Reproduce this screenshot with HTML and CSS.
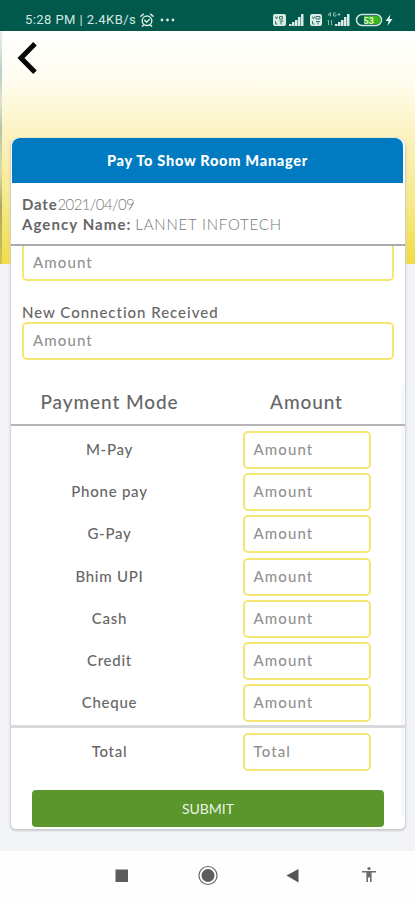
FILE: index.html
```html
<!DOCTYPE html>
<html lang="en">
<head>
<meta charset="utf-8">
<title>Pay To Show Room Manager</title>
<link rel="stylesheet" href="styles.css">
</head>
<body>
<div class="status">
  <span class="status-text">5:28 PM | 2.4KB/s</span>
  <svg class="alarm" width="14" height="14" viewBox="0 0 14 14" fill="none" stroke="#d3e8e1" stroke-width="1.5" stroke-linecap="round"><circle cx="7" cy="7.8" r="4.8"/><path d="M1 3.2 3.4 1.2M13 3.2 10.6 1.2M4.8 7.4 6.6 9.2 9.3 6.4M3.4 12.2l-1 1M10.6 12.2l1 1"/></svg>
  <svg class="dots" width="15" height="4" viewBox="0 0 15 4" fill="#d3e8e1"><circle cx="2" cy="2" r="1.4"/><circle cx="7.5" cy="2" r="1.4"/><circle cx="13" cy="2" r="1.4"/></svg>
  <svg class="signals" width="122" height="18" viewBox="0 0 122 18">
    <g fill="#d9ece6"><rect x="0" y="3" width="13" height="12" rx="2"/><rect x="37" y="3" width="12" height="12" rx="2"/>
    <path d="M16 15v-2h2.500v2zM19 15v-4h2.500v4zM22 15V9h2.500v6zM25 15V6h2.500v9zM28 15V3h2.500v12zM62 15v-2h2.500v2zM65 15v-4h2.500v4zM68 15V9h2.500v6zM71 15V6h2.500v9zM74 15V3h2.500v12z"/></g>
    <g fill="none" stroke="#3f7668" stroke-width="1"><path d="M2.500 5.500 3.500 8 4.500 5.500M6.500 5.500h3v2.500h-3zM2.500 10v3h2M6.500 10h4M8 10v3.500M39.500 5.500 40.500 8 41.500 5.500M43 5.500h4v2.500h-4zM39.500 10v3h2M43 10.500h4M45 10v3.500"/></g>
    <g fill="none" stroke="#8ab8aa" stroke-width="1"><path d="M57 1.500 55 4h3M57.500 1.500v4M63 2h-2.500v3H63V3.500M64.500 3.500h3M66 2v3M55.500 9v5M58.500 9v5M54.500 10l1-1M59.500 13l-1 1"/></g>
    <rect x="83.500" y="3.500" width="25" height="11" rx="5.500" fill="#07594a" stroke="#cfe6dd" stroke-width="1.500"/>
    <path d="M91 5h12.500a4 4 0 0 1 0 8H91z" fill="#39b51d"/>
    <text class="battery-text" x="90.500" y="12.500">53</text>
    <path d="M117.500 3.500 112.500 10h3l-1 5 5-7h-3z" fill="#e6f3ee"/>
  </svg>
</div>

<main class="screen">
  <svg class="back" width="22" height="32" viewBox="0 0 22 32" fill="none" stroke="#050505" stroke-width="5"><path d="M19 1.800 5 16 19 30.200"/></svg>

  <section class="card">
    <h1 class="title"><span>Pay To Show Room Manager</span></h1>
    <div class="details">
      <div><b class="key date-key">Date</b><span class="date">2021/04/09</span></div>
      <div><b class="key">Agency Name:</b> <span class="agency">LANNET INFOTECH</span></div>
    </div>
    <div class="fields">
      <div class="field field-cut">Amount</div>
      <div class="label">New Connection Received</div>
      <div class="field">Amount</div>
    </div>
    <div class="payments">
      <div class="row head"><span>Payment Mode</span><span>Amount</span></div>
      <div class="row"><span>M-Pay</span><div class="field">Amount</div></div>
      <div class="row"><span>Phone pay</span><div class="field">Amount</div></div>
      <div class="row"><span>G-Pay</span><div class="field">Amount</div></div>
      <div class="row"><span>Bhim UPI</span><div class="field">Amount</div></div>
      <div class="row"><span>Cash</span><div class="field">Amount</div></div>
      <div class="row"><span>Credit</span><div class="field">Amount</div></div>
      <div class="row"><span>Cheque</span><div class="field">Amount</div></div>
      <div class="row total"><span>Total</span><div class="field total-field">Total</div></div>
      <div class="submit">SUBMIT</div>
    </div>
  </section>
</main>

<nav class="nav">
  <svg width="415" height="49" viewBox="0 0 415 49">
    <rect x="115.500" y="18.500" width="12.500" height="12.500" fill="#5c5c5c"/>
    <circle cx="208" cy="24.500" r="9" fill="none" stroke="#666" stroke-width="1.200"/><circle cx="208" cy="24.500" r="6.500" fill="#5c5c5c"/>
    <path d="M286.500 24.500 298.500 18v13.500z" fill="#555"/>
    <g fill="#6c6c6c"><circle cx="369" cy="17.500" r="1.600"/><path d="M362 20h14v1.600h-4.400V31H370v-4.500h-2V31h-1.600v-9.400H362z"/></g>
  </svg>
</nav>
</body>
</html>
```

FILE: styles.css
```css
* { box-sizing: border-box; }

body {
  margin: 0;
  width: 415px;
  height: 900px;
  overflow: hidden;
  display: flex;
  flex-direction: column;
  font-family: Lato, "Open Sans", sans-serif;
  color: #666;
  background: #fff;
}

.status {
  height: 31px;
  flex: none;
  display: flex;
  align-items: center;
  padding: 8px 0 0 25px;
  background: #00594b;
}
.status-text {
  width: 112px;
  font: 13px/16px Roboto, sans-serif;
  letter-spacing: 0.43px;
  color: #d3e8e1;
  white-space: nowrap;
}
.alarm { margin-left: 3px; }
.dots { margin-left: 6px; }
.signals { margin-left: 98px; }
.battery-text { font: bold 9px Roboto, sans-serif; fill: #e6f5d9; }

.screen {
  height: 820px;
  flex: none;
  padding: 0 10px 0 11px;
  background:
    linear-gradient(#e9f0ee, #b9cdc8 18%, #dfe3d0 30%, #b5c4ac 42%, #dcdca0 60%, #a9aa62 75%, #cfc25a) 0 0 / 2px 233px no-repeat,
    linear-gradient(#fff 0, #fffdf1 20%, #fbf2bd 46%, #f7e98a 72%, #f1dc48 100%) 0 0 / 100% 233px no-repeat,
    #f2f4f7;
}
.back { display: block; margin-left: 5px; position: relative; top: 11px; }

.card {
  height: 691px;
  margin-top: 75px;
  display: flex;
  flex-direction: column;
  background: #fff;
  border-radius: 8px 8px 5px 5px;
  box-shadow: 0 1px 2px 1px #c9ccce;
  overflow: hidden;
}
.title {
  flex: none;
  height: 45px;
  margin: 0 2px 0 1px;
  background: #007bc2;
  border-radius: 8px 8px 0 0;
  color: #fff;
  font-size: 14.5px;
  line-height: 45px;
  font-weight: 900;
  letter-spacing: 0.74px;
  text-align: center;
}
.details {
  flex: none;
  height: 63px;
  padding: 12px 11px 0;
  border-bottom: 2px solid #aaa;
  font-size: 15px;
  line-height: 19.5px;
  color: #777;
}
.key { color: #666; font-weight: 700; letter-spacing: 1.08px; }
.date-key { letter-spacing: 0.8px; }
.date, .agency { font-weight: 300; }
.date { letter-spacing: -0.6px; }
.agency { letter-spacing: 0.8px; }

.fields { flex: none; height: 139px; padding: 0 11px; }
.field {
  width: 372px;
  height: 38px;
  padding-left: 9px;
  border: 2px solid #f5e673;
  border-radius: 5px;
  background: #fff;
  color: #929292;
  font-size: 15px;
  line-height: 33px;
  font-weight: 500;
  letter-spacing: 1.1px;
}
.field-cut { height: 35px; border-top: 0; border-radius: 0 0 5px 5px; line-height: 33px; }
.label {
  height: 41px;
  padding-top: 21px;
  font-size: 15px;
  line-height: 20px;
  font-weight: 500;
  letter-spacing: 0.98px;
}

.payments {
  flex: none;
  background: linear-gradient(#f7f8f9, #f7f8f9) right top / 4px 431px no-repeat;
}
.row {
  height: 42.2px;
  display: grid;
  grid-template-columns: 197px 197px;
  align-items: center;
  justify-items: center;
  font-size: 15px;
  font-weight: 500;
  letter-spacing: 0.75px;
}
.row span { position: relative; top: -1px; }
.row .field { width: 128px; }
.head {
  height: 41px;
  padding-bottom: 6px;
  margin-bottom: 3px;
  border-bottom: 2px solid #b6b4b7;
  font-size: 19px;
  letter-spacing: 0.9px;
}
.head span { top: 0; }
.total { height: 50px; margin-top: 1px; border-top: 3px solid #d9d9d9; }

.submit {
  width: 352px;
  height: 37px;
  margin: 15px 0 0 21px;
  background: #5a962b;
  border-radius: 4px;
  color: #edf3e6;
  text-align: center;
  font-size: 14px;
  line-height: 37px;
}
.nav { height: 49px; flex: none; background: #fefefe; }
.nav svg { display: block; }
```
